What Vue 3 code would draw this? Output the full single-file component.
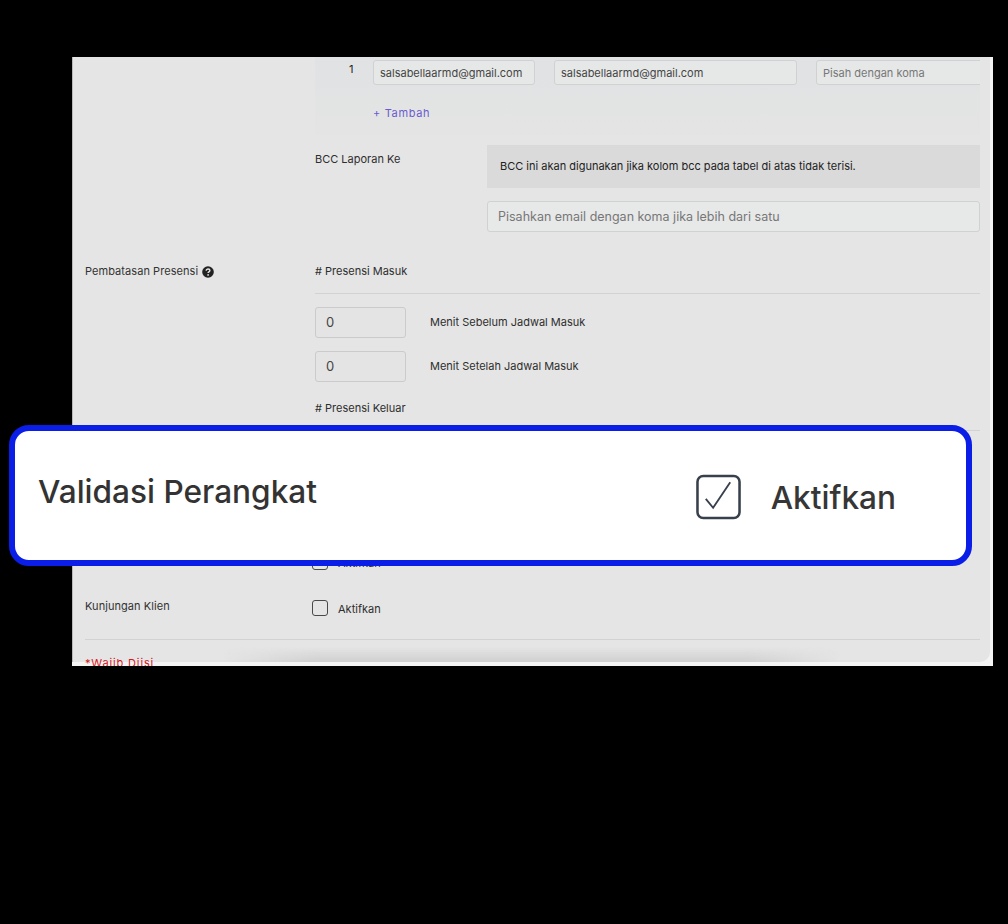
<script setup>
const emails = ["salsabellaarmd@gmail.com", "salsabellaarmd@gmail.com"];
</script>

<template>
  <div class="page">
    <div class="screen">
      <div class="card">
        <div class="block">
          <div class="mail-row">
            <span class="num">1</span>
            <input v-for="(mail, i) in emails" :key="i" class="mail" :class="'mail-' + i" :value="mail" readonly />
            <input class="mail mail-last" placeholder="Pisah dengan koma" />
          </div>
          <div class="add">+ Tambah</div>
        </div>

        <div class="bcc">
          <div class="bcc-label">BCC Laporan Ke</div>
          <div>
            <div class="alert">BCC ini akan digunakan jika kolom bcc pada tabel di atas tidak terisi.</div>
            <input class="bcc-input" placeholder="Pisahkan email dengan koma jika lebih dari satu" />
          </div>
        </div>

        <div class="row limit">
          <div class="label">
            Pembatasan Presensi
            <svg class="help" viewBox="0 0 12 12" width="12" height="12">
              <circle cx="6" cy="6" r="5.8" fill="#222" />
              <path d="M4.2 4.7c0-1.1.8-1.7 1.9-1.7 1 0 1.8.6 1.8 1.5 0 1.4-1.8 1.3-1.8 2.5" fill="none" stroke="#e5e5e5" stroke-width="1.4" />
              <circle cx="6.1" cy="8.9" r=".85" fill="#e5e5e5" />
            </svg>
          </div>
          <div class="body">
            <div class="sub">
              <div class="sub-title"># Presensi Masuk</div>
              <hr />
              <div class="minute"><input class="num-input" value="0" readonly /><span>Menit Sebelum Jadwal Masuk</span></div>
              <div class="minute"><input class="num-input" value="0" readonly /><span>Menit Setelah Jadwal Masuk</span></div>
            </div>
            <div class="sub sub-out">
              <div class="sub-title"># Presensi Keluar</div>
              <hr />
              <div class="minute"><input class="num-input" value="0" readonly /><span>Menit Sebelum Jadwal Keluar</span></div>
              <div class="minute"><input class="num-input" value="0" readonly /><span>Menit Setelah Jadwal Keluar</span></div>
            </div>
          </div>
        </div>

        <div class="row check-row first-check">
          <div class="label">Validasi Perangkat</div>
          <label class="check"><span class="box"></span>Aktifkan</label>
        </div>
        <div class="row check-row second-check">
          <div class="label">Kunjungan Klien</div>
          <label class="check"><span class="box"></span>Aktifkan</label>
        </div>

        <hr class="bottom-line" />
        <div class="required">*Wajib Diisi</div>
        <div class="fade"></div>
      </div>
    </div>

    <div class="callout">
      <div class="callout-title">Validasi Perangkat</div>
      <div class="callout-check">
        <svg viewBox="0 0 46 46" width="45" height="46">
          <rect x="1.5" y="1.5" width="43" height="43" rx="6" fill="#fff" stroke="#39404d" stroke-width="2.6" />
          <path d="M10 25l7.5 9L35 8" fill="none" stroke="#39404d" stroke-width="1.9" />
        </svg>
        <span>Aktifkan</span>
      </div>
    </div>
  </div>
</template>

<style>
html,
body {
  margin: 0;
  background: #000;
}
</style>

<style scoped>
.page {
  position: relative;
  width: 1008px;
  height: 924px;
  padding: 57px 0 0 72px;
  box-sizing: border-box;
  background: #000;
  font-family: Inter, "Noto Sans", sans-serif;
  font-size: 11px;
  color: #2e2e2e;
}

.screen {
  width: 921px;
  height: 609px;
  overflow: hidden;
  background: #f4f4f4;
}

.card {
  position: relative;
  width: 918px;
  height: 605px;
  box-sizing: border-box;
  padding: 0 10px 0 12px;
  background: #e5e5e5;
  border-left: 1px solid #b9b9b9;
  border-radius: 0 0 10px 0;
}

.block {
  height: 78px;
  margin-left: 230px;
  background: linear-gradient(#e0e2e3, #e4e4e4);
}

.mail-row {
  display: flex;
  padding-top: 3px;
  overflow: hidden;
}

.num {
  flex: none;
  width: 58px;
  padding: 2px 0 0 34px;
  box-sizing: border-box;
  color: #222;
}

input {
  box-sizing: border-box;
  margin: 0;
  border: 1px solid #cfd1d2;
  border-radius: 3px;
  background: #e6e8e8;
  font-family: inherit;
  color: #444;
  outline: none;
}

input::placeholder {
  color: #777;
  opacity: 1;
}

.mail {
  flex: none;
  height: 25px;
  padding: 0 6px;
  font-size: 11px;
}

.mail-0 {
  width: 162px;
  margin-right: 19px;
}

.mail-1 {
  width: 243px;
  margin-right: 19px;
}

.mail-last {
  width: 200px;
}

.add {
  margin: 21px 0 0 58px;
  line-height: 14px;
  letter-spacing: 0.65px;
  color: #6a5bd0;
}

.bcc {
  display: grid;
  grid-template-columns: 172px 1fr;
  margin: 10px 0 0 230px;
}

.bcc-label {
  padding-top: 7px;
  line-height: 14px;
}

.alert {
  height: 43px;
  padding-left: 13px;
  box-sizing: border-box;
  line-height: 43px;
  background: #dadada;
  color: #222;
}

.bcc-input {
  display: block;
  width: 100%;
  height: 31px;
  margin-top: 13px;
  padding: 0 10px;
  font-size: 12.5px;
  background: #e7e8e8;
}

.row {
  display: grid;
  grid-template-columns: 230px 1fr;
}

.limit {
  margin-top: 30px;
}

.label {
  line-height: 18px;
  letter-spacing: 0.06px;
  color: #333;
}

.help {
  vertical-align: -2.5px;
  margin-left: 1px;
}

.sub-title {
  line-height: 18px;
}

hr {
  height: 1px;
  margin: 13px 0 13px;
  border: 0;
  background: #d2d2d2;
}

.minute {
  display: flex;
  align-items: center;
  gap: 24px;
  margin-bottom: 13px;
}

.minute span {
  margin-top: -2px;
}

.num-input {
  width: 91px;
  height: 31px;
  padding: 0 10px 2px;
  font-size: 13px;
  background: #e4e4e4;
  border-color: #cbcbcb;
}

.sub-out {
  margin-top: 17px;
}

.first-check {
  margin-top: 20px;
}

.second-check {
  margin-top: 26px;
}

.check-row .label {
  margin-top: -1px;
}

.check {
  display: flex;
  align-items: center;
  gap: 10px;
  margin-left: -3px;
  padding-top: 2px;
  line-height: 16px;
}

.box {
  width: 16px;
  height: 16px;
  margin-bottom: 2px;
  box-sizing: border-box;
  border: 1px solid #4a4a4a;
  border-radius: 3px;
}

.bottom-line {
  margin: 21px 0 0;
}

.required {
  margin-top: 16px;
  line-height: 14px;
  letter-spacing: 0.85px;
  color: #d8161c;
}

.fade {
  position: absolute;
  left: 150px;
  right: 150px;
  top: 590px;
  height: 15px;
  background: linear-gradient(rgba(208, 208, 208, 0), #d0d0d0);
  -webkit-mask-image: linear-gradient(90deg, transparent, #000 15%, #000 85%, transparent);
  mask-image: linear-gradient(90deg, transparent, #000 15%, #000 85%, transparent);
}

.callout {
  position: absolute;
  left: 9px;
  top: 425px;
  display: flex;
  justify-content: space-between;
  width: 963px;
  height: 141px;
  box-sizing: border-box;
  padding: 0 70px 0 23px;
  background: #fff;
  border: 6px solid #0a1ee8;
  border-radius: 20px;
}

.callout-title {
  margin-top: 39px;
  font-size: 31.6px;
  font-weight: 500;
  line-height: 44px;
  color: #333;
}

.callout-check {
  display: flex;
  align-items: center;
  gap: 30px;
  margin-top: 43px;
  height: 46px;
  font-size: 31.6px;
  font-weight: 500;
  color: #363636;
}

.callout-check svg {
  flex: none;
}
</style>
